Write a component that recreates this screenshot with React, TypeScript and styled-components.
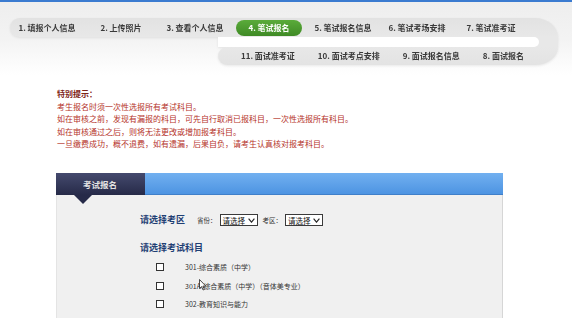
import React from "react";
import styled, { createGlobalStyle } from "styled-components";

const GlobalStyle = createGlobalStyle`
  html, body {
    margin: 0;
    padding: 0;
    background: #ffffff;
  }
  body {
    font-family: "Noto Sans CJK SC", "Noto Sans", sans-serif;
  }
`;

const Page = styled.div`
  position: relative;
  width: 572px;
  height: 318px;
  overflow: hidden;
  box-sizing: border-box;
  border-top: 2px solid #3b7bd0;
  background: #ffffff;
`;

const StepsArea = styled.div`
  padding: 16px 0 10px;
  background: linear-gradient(to bottom, #eeeeee 0%, #f3f3f3 50%, #ffffff 100%);
`;

const Snake = styled.div`
  margin-left: 10px;
  width: 548px;
  filter: drop-shadow(0 1px 1px rgba(0, 0, 0, 0.08));
`;

const TopRow = styled.div`
  display: flex;
  align-items: center;
  height: 19px;
  background: linear-gradient(to bottom, #e2e2e2, #e8e8e8);
  border-radius: 9.5px 23px 0 9.5px / 9.5px 19px 0 9.5px;
`;

const GapRow = styled.div`
  display: flex;
  height: 10px;
  margin-left: 208px;
  background: #e8e8e8;
`;

const Notch = styled.div`
  flex: 1;
  margin-right: 19px;
  background: #ffffff;
  border-radius: 0 5px 5px 0;
`;

const BottomRow = styled.div`
  display: flex;
  align-items: center;
  gap: 23px;
  height: 18px;
  margin-left: 208px;
  padding-left: 23px;
  background: linear-gradient(to bottom, #e8e8e8, #e3e3e3);
  border-radius: 9px 0 23px 9px / 9px 0 18px 9px;
`;

const StepCell = styled.div`
  width: 74px;
  display: flex;
  justify-content: center;
`;

const Step = styled.span<{ $active?: boolean }>`
  font-size: 8px;
  font-weight: 700;
  line-height: 16px;
  white-space: nowrap;
  color: ${({ $active }) => ($active ? "#ffffff" : "#3a3a3a")};
  background: ${({ $active }) =>
    $active ? "linear-gradient(to bottom, #5aab3a, #3f8a25)" : "transparent"};
  border-radius: 8px;
  padding: ${({ $active }) => ($active ? "0 12px" : "0")};
`;

const Notice = styled.div`
  margin: 13px 0 0 57px;
  font-size: 8px;
  line-height: 12.5px;
  color: #b5332a;
`;

const NoticeTitle = styled.div`
  font-weight: 700;
  color: #7d2418;
`;

const Panel = styled.div`
  margin: 22.5px 0 0 56px;
  width: 447px;
`;

const PanelHeader = styled.div`
  display: flex;
  height: 22px;
`;

const Tab = styled.div`
  position: relative;
  width: 89px;
  padding-left: 27px;
  box-sizing: border-box;
  background: linear-gradient(to bottom, #454a6e, #262a48);
  color: #e2e2e2;
  font-size: 8.5px;
  font-weight: 700;
  line-height: 22px;

  &::after {
    content: "";
    position: absolute;
    left: 18px;
    top: 100%;
    border-left: 9px solid transparent;
    border-right: 9px solid transparent;
    border-top: 9px solid #262a48;
  }
`;

const HeaderBar = styled.div`
  flex: 1;
  box-sizing: border-box;
  background: linear-gradient(to bottom, #72b0f0, #4d94e2);
  border-bottom: 1px solid #3f7fc9;
`;

const PanelBody = styled.div`
  height: 140px;
  padding: 18px 0 0 83px;
  background: #f0f0f0;
  border-left: 1px solid #e4e4e4;
  border-right: 1px solid #d6d6d6;
`;

const AreaRow = styled.div`
  display: flex;
  align-items: center;
  height: 14px;
`;

const SectionLabel = styled.span`
  font-size: 9px;
  font-weight: 700;
  line-height: 12px;
  color: #1f3f74;
  white-space: nowrap;
`;

const FieldLabel = styled.span<{ $ml: number }>`
  margin-left: ${({ $ml }) => $ml}px;
  margin-right: 3px;
  font-size: 6.5px;
  color: #333333;
  white-space: nowrap;
`;

const FakeSelect = styled.div`
  display: flex;
  align-items: center;
  justify-content: space-between;
  width: 38px;
  height: 12px;
  box-sizing: border-box;
  padding: 0 2px 0 2px;
  background: #ffffff;
  border: 1px solid #3a3a3a;
  font-size: 7.5px;
  color: #111111;
`;

const SubjectsTitle = styled.div`
  display: flex;
  align-items: center;
  height: 12px;
  margin-top: 15px;
`;

const SubjectList = styled.div`
  margin-top: 4px;
  padding-left: 16px;
`;

const SubjectRow = styled.label`
  display: flex;
  align-items: center;
  gap: 21px;
  height: 18.5px;
`;

const Box = styled.span`
  width: 8px;
  height: 8px;
  box-sizing: border-box;
  border: 1px solid #333333;
  background: #ffffff;
`;

const SubjectText = styled.span`
  font-size: 7px;
  color: #333333;
  white-space: nowrap;
`;

const Cursor = styled.svg`
  position: absolute;
  left: 199px;
  top: 277px;
`;

const Chevron = () => (
  <svg width="7" height="5" viewBox="0 0 7 5">
    <polyline points="0.6,0.6 3.5,4.2 6.4,0.6" fill="none" stroke="#222" strokeWidth="1.1" />
  </svg>
);

const topSteps = [
  "1. 填报个人信息",
  "2. 上传照片",
  "3. 查看个人信息",
  "4. 笔试报名",
  "5. 笔试报名信息",
  "6. 笔试考场安排",
  "7. 笔试准考证",
];

const bottomSteps = ["11. 面试准考证", "10. 面试考点安排", "9. 面试报名信息", "8. 面试报名"];

const notices = [
  "考生报名时须一次性选报所有考试科目。",
  "如在审核之前，发现有漏报的科目，可先自行取消已报科目，一次性选报所有科目。",
  "如在审核通过之后，则将无法更改或增加报考科目。",
  "一旦缴费成功，概不退费，如有遗漏，后果自负，请考生认真核对报考科目。",
];

const subjects = ["301-综合素质（中学）", "301A-综合素质（中学）（音体美专业）", "302-教育知识与能力"];

export default function App() {
  return (
    <>
      <GlobalStyle />
      <Page>
        <StepsArea>
          <Snake>
            <TopRow>
              {topSteps.map((s, i) => (
                <StepCell key={s}>
                  <Step $active={i === 3}>{s}</Step>
                </StepCell>
              ))}
            </TopRow>
            <GapRow>
              <Notch />
            </GapRow>
            <BottomRow>
              {bottomSteps.map((s) => (
                <Step key={s}>{s}</Step>
              ))}
            </BottomRow>
          </Snake>
        </StepsArea>

        <Notice>
          <NoticeTitle>特别提示：</NoticeTitle>
          {notices.map((n) => (
            <div key={n}>{n}</div>
          ))}
        </Notice>

        <Panel>
          <PanelHeader>
            <Tab>考试报名</Tab>
            <HeaderBar />
          </PanelHeader>
          <PanelBody>
            <AreaRow>
              <SectionLabel>请选择考区</SectionLabel>
              <FieldLabel $ml={12}>省份：</FieldLabel>
              <FakeSelect>
                请选择
                <Chevron />
              </FakeSelect>
              <FieldLabel $ml={5}>考区：</FieldLabel>
              <FakeSelect>
                请选择
                <Chevron />
              </FakeSelect>
            </AreaRow>
            <SubjectsTitle>
              <SectionLabel>请选择考试科目</SectionLabel>
            </SubjectsTitle>
            <SubjectList>
              {subjects.map((s) => (
                <SubjectRow key={s}>
                  <Box />
                  <SubjectText>{s}</SubjectText>
                </SubjectRow>
              ))}
            </SubjectList>
          </PanelBody>
        </Panel>

        <Cursor width="8" height="12" viewBox="0 0 8 12">
          <path d="M0.5 0.5 L0.5 9.5 L2.6 7.6 L4.1 11 L5.4 10.4 L3.9 7.1 L6.8 7.1 Z" fill="#fff" stroke="#222" strokeWidth="0.8" />
        </Cursor>
      </Page>
    </>
  );
}
